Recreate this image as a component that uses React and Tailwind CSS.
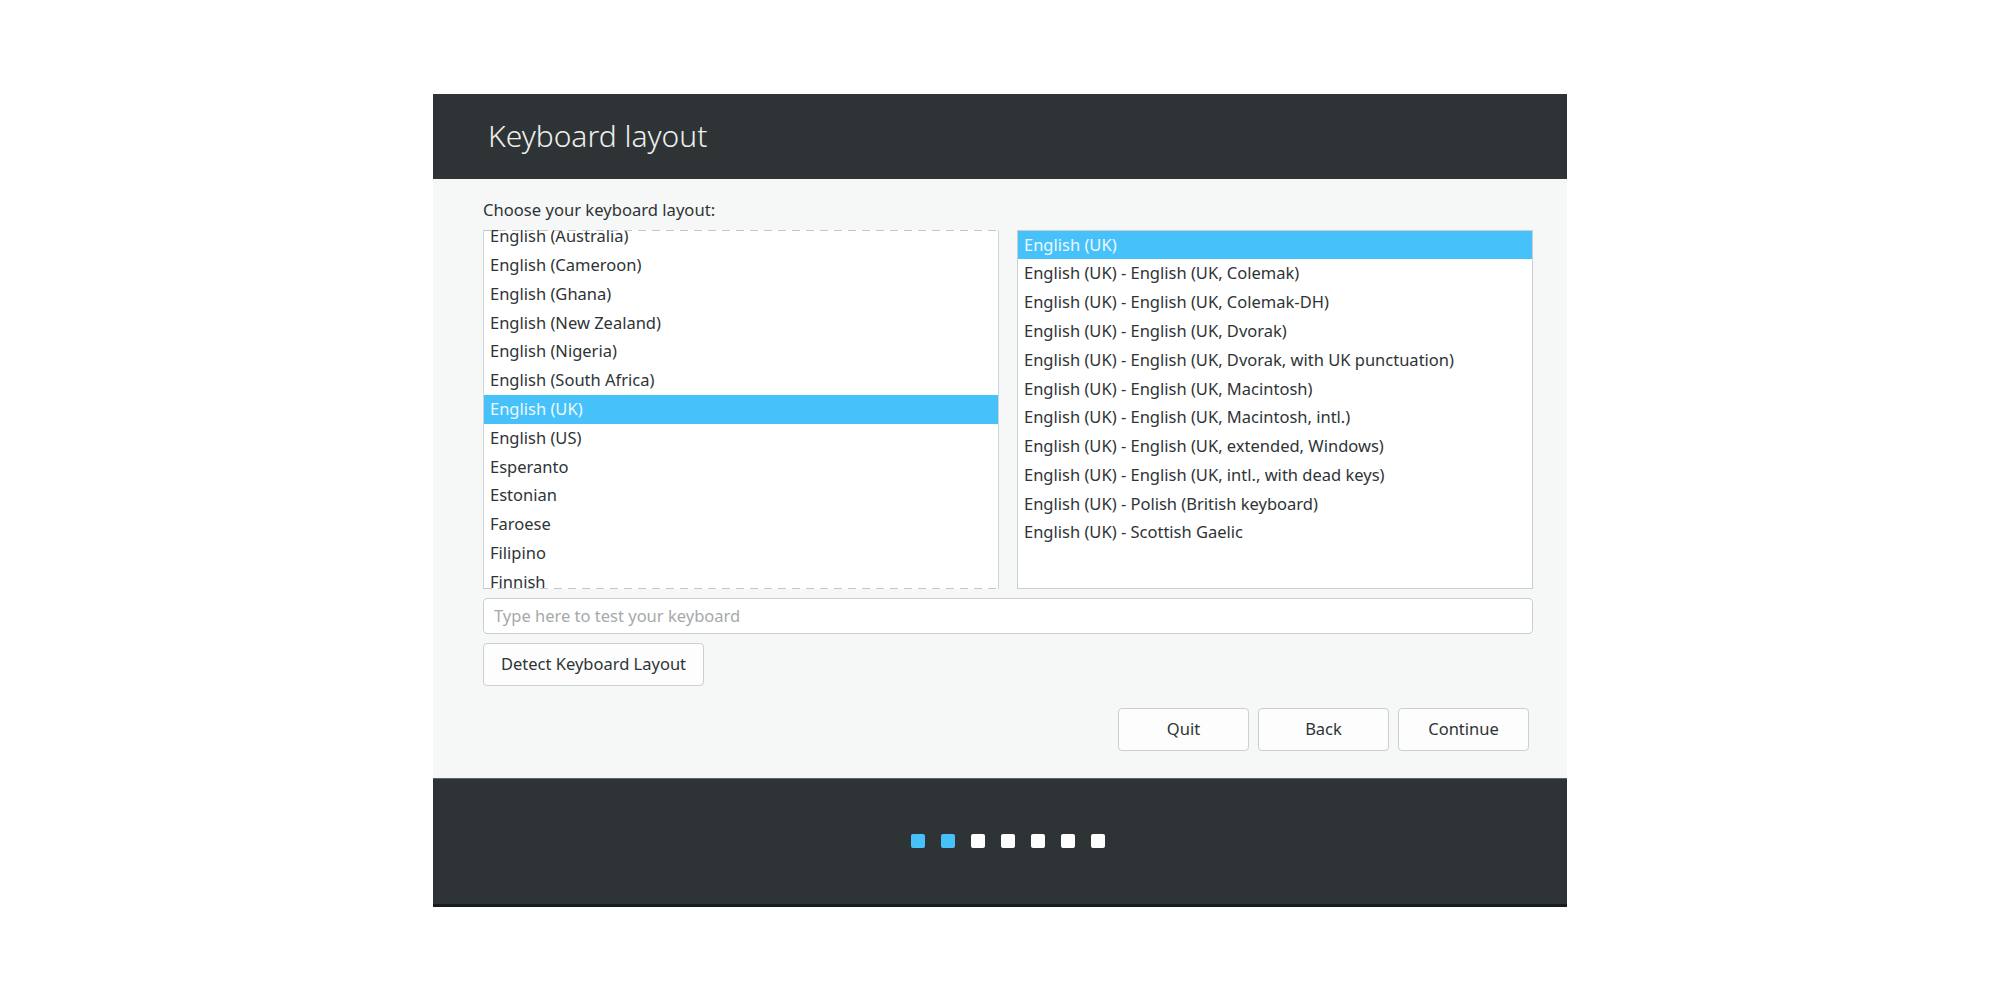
const LAYOUTS = [
  'English (Australia)',
  'English (Cameroon)',
  'English (Ghana)',
  'English (New Zealand)',
  'English (Nigeria)',
  'English (South Africa)',
  'English (UK)',
  'English (US)',
  'Esperanto',
  'Estonian',
  'Faroese',
  'Filipino',
  'Finnish',
  'Finnish (Sami)',
]

const VARIANTS = [
  'English (UK)',
  'English (UK) - English (UK, Colemak)',
  'English (UK) - English (UK, Colemak-DH)',
  'English (UK) - English (UK, Dvorak)',
  'English (UK) - English (UK, Dvorak, with UK punctuation)',
  'English (UK) - English (UK, Macintosh)',
  'English (UK) - English (UK, Macintosh, intl.)',
  'English (UK) - English (UK, extended, Windows)',
  'English (UK) - English (UK, intl., with dead keys)',
  'English (UK) - Polish (British keyboard)',
  'English (UK) - Scottish Gaelic',
]

const STEPS = [true, true, false, false, false, false, false]

function Row({ label, selected }) {
  return (
    <div
      className={
        'h-[28.8px] flex items-center pl-[6px] whitespace-nowrap ' +
        (selected ? 'bg-[#47c1fa] text-[#eef8fe]' : 'text-[#2e3436]')
      }
    >
      {label}
    </div>
  )
}

function Button({ children, className = '' }) {
  return (
    <button
      className={
        'flex items-center justify-center bg-[#fdfdfd] border border-[#cad0d1] rounded-[4px] text-[#2e3436] text-[16.5px] ' +
        className
      }
    >
      {children}
    </button>
  )
}

// scroll-undershoot marks at the top and bottom of the layout list
function Undershoot({ className }) {
  return (
    <div
      className={
        'absolute left-0 right-0 h-px bg-[repeating-linear-gradient(90deg,#c2c7c8_0_8px,transparent_8px_14px)] ' +
        className
      }
    />
  )
}

export default function App() {
  return (
    <div
      className="w-full h-screen bg-white flex items-center justify-center"
      style={{ fontFamily: '"Noto Sans", "Open Sans", sans-serif' }}
    >
      <div className="w-[1134px] h-[813px] flex flex-col">
        {/* Header */}
        <div className="h-[85px] bg-[#2e3436] flex items-center pl-[55px] shrink-0">
          <h1 className="text-[30px] font-light text-[#eeeeec] leading-none">Keyboard layout</h1>
        </div>

        {/* Body */}
        <div className="flex-1 bg-[#f6f7f7] flex flex-col pl-[50px] pr-[34px] pt-[20px]">
          <div className="text-[16.6px] text-[#2e3436] leading-[22px] h-[31px]">Choose your keyboard layout:</div>

          <div className="flex gap-[18px] h-[359px] text-[16.5px]">
            <div className="flex-1 bg-white border-x border-[#cfd4d5] overflow-hidden relative">
              <div className="-mt-[7.4px]">
                {LAYOUTS.map(l => (
                  <Row key={l} label={l} selected={l === 'English (UK)'} />
                ))}
              </div>
              <Undershoot className="top-0" />
              <Undershoot className="bottom-0" />
            </div>
            <div className="flex-1 bg-white border border-[#cad0d1] overflow-hidden">
              {VARIANTS.map((v, i) => (
                <Row key={v} label={v} selected={i === 0} />
              ))}
            </div>
          </div>

          <input
            placeholder="Type here to test your keyboard"
            className="mt-[9px] h-[36px] bg-white border border-[#cad0d1] rounded-[4px] px-[10px] text-[16.5px] placeholder:text-[#a5a9ab] outline-none"
          />

          <Button className="mt-[9px] w-[221px] h-[43px]">Detect Keyboard Layout</Button>

          <div className="flex justify-end gap-[9px] mt-[22px] pr-[4px]">
            <Button className="w-[131px] h-[43px]">Quit</Button>
            <Button className="w-[131px] h-[43px]">Back</Button>
            <Button className="w-[131px] h-[43px]">Continue</Button>
          </div>
        </div>

        {/* Footer with progress */}
        <div className="h-[129px] bg-[#2e3436] border-t border-[#5d6263] border-b-[3px] border-b-[#181c1d] flex items-center justify-center pl-[16px] gap-[16px] shrink-0">
          {STEPS.map((done, i) => (
            <div
              key={i}
              className={'w-[14px] h-[14px] rounded-[2px] ' + (done ? 'bg-[#47c1fa]' : 'bg-white')}
            />
          ))}
        </div>
      </div>
    </div>
  )
}
